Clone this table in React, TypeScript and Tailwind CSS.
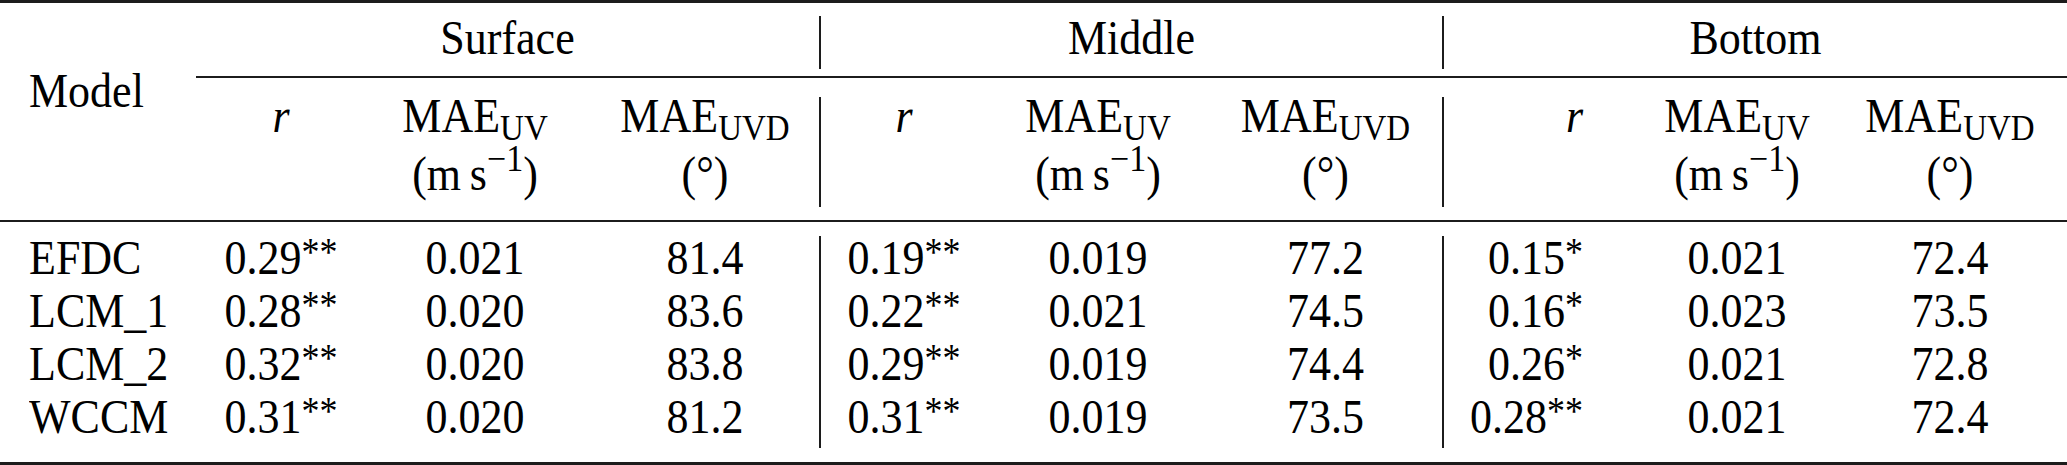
import React from 'react';

type Cell = { v: string; star?: string };

const rows: { model: string; cells: Cell[] }[] = [
  {
    model: 'EFDC',
    cells: [
      { v: '0.29', star: '**' }, { v: '0.021' }, { v: '81.4' },
      { v: '0.19', star: '**' }, { v: '0.019' }, { v: '77.2' },
      { v: '0.15', star: '*' }, { v: '0.021' }, { v: '72.4' },
    ],
  },
  {
    model: 'LCM_1',
    cells: [
      { v: '0.28', star: '**' }, { v: '0.020' }, { v: '83.6' },
      { v: '0.22', star: '**' }, { v: '0.021' }, { v: '74.5' },
      { v: '0.16', star: '*' }, { v: '0.023' }, { v: '73.5' },
    ],
  },
  {
    model: 'LCM_2',
    cells: [
      { v: '0.32', star: '**' }, { v: '0.020' }, { v: '83.8' },
      { v: '0.29', star: '**' }, { v: '0.019' }, { v: '74.4' },
      { v: '0.26', star: '*' }, { v: '0.021' }, { v: '72.8' },
    ],
  },
  {
    model: 'WCCM',
    cells: [
      { v: '0.31', star: '**' }, { v: '0.020' }, { v: '81.2' },
      { v: '0.31', star: '**' }, { v: '0.019' }, { v: '73.5' },
      { v: '0.28', star: '**' }, { v: '0.021' }, { v: '72.4' },
    ],
  },
];

// column boxes, left to right (vertical rules sit before index 3 and 6)
const colCls = [
  'w-[170px] justify-center',
  'w-[218px] justify-center',
  'w-[235px] pl-[7px] justify-center',
  'w-[166px] justify-center',
  'w-[222px] justify-center',
  'w-[233px] justify-center',
  'w-[139px] justify-end',
  'w-[308px] justify-center',
  'w-[118px] justify-center',
];

const groups = ['Surface', 'Middle', 'Bottom'];

// the source type is a little taller than Times at the same width
function Tx({ children }: { children: React.ReactNode }) {
  return <span className="inline-block whitespace-nowrap origin-[50%_38px] scale-y-[1.1]">{children}</span>;
}

function VRule() {
  return <div className="w-[2px] shrink-0 self-stretch bg-[#1c1c1c]" />;
}

function Mae({ sub }: { sub: string }) {
  return (
    <Tx>
      MAE<span className="text-[33px] leading-[0] align-[-8px]">{sub}</span>
    </Tx>
  );
}

function HeaderCell({ idx }: { idx: number }) {
  const kind = idx % 3;
  return (
    <div className={`flex shrink-0 ${colCls[idx]}`}>
      <div className="flex flex-col items-center whitespace-nowrap">
        <div className="h-[55px] leading-[41px]">
          {kind === 0 ? (
            <Tx>
              <span className="italic">r</span>
            </Tx>
          ) : kind === 1 ? (
            <Mae sub="UV" />
          ) : (
            <Mae sub="UVD" />
          )}
        </div>
        <div className="h-[55px] leading-[47px]">
          {kind === 1 ? (
            <Tx>
              (m&thinsp;s<span className="text-[34px] leading-[0] align-[17px]">−1</span>)
            </Tx>
          ) : kind === 2 ? (
            <Tx>(°)</Tx>
          ) : null}
        </div>
      </div>
    </div>
  );
}

export default function App() {
  return (
    <div className="w-[2067px] h-[465px] bg-white text-black text-[44px] font-['Liberation_Serif','Times_New_Roman',serif] overflow-hidden">
      <div className="h-[3px] bg-[#1c1c1c]" />

      {/* header */}
      <div className="flex pt-[13px]">
        <div className="w-[196px] shrink-0 pl-[29px] pt-[53px] leading-[47px]">
          <Tx>Model</Tx>
        </div>
        <div className="flex-1 flex flex-col">
          <div className="flex h-[53px] leading-[47px]">
            {groups.map((g, i) => (
              <React.Fragment key={g}>
                {i > 0 && <VRule />}
                <div className={`flex justify-center ${i === 2 ? 'flex-1' : i === 0 ? 'w-[623px]' : 'w-[621px]'}`}>
                  <Tx>{g}</Tx>
                </div>
              </React.Fragment>
            ))}
          </div>
          <div className="mt-[7px] h-[2px] bg-[#1c1c1c]" />
          <div className="flex mt-[19px]">
            {colCls.map((_, i) => (
              <React.Fragment key={i}>
                {(i === 3 || i === 6) && <VRule />}
                <HeaderCell idx={i} />
              </React.Fragment>
            ))}
          </div>
        </div>
      </div>

      <div className="mt-[13px] h-[2px] bg-[#1c1c1c]" />

      {/* body */}
      <div className="pt-[14px] pb-[14px]">
        {rows.map((row) => (
          <div key={row.model} className="flex h-[53px] leading-[47px]">
            <div className="w-[196px] shrink-0 pl-[29px]">
              <Tx>{row.model}</Tx>
            </div>
            {row.cells.map((c, i) => (
              <React.Fragment key={i}>
                {(i === 3 || i === 6) && <VRule />}
                <div className={`flex shrink-0 ${colCls[i]}`}>
                  <Tx>
                    {c.v}
                    {c.star && <span className="text-[36px] leading-[0] align-[8px]">{c.star}</span>}
                  </Tx>
                </div>
              </React.Fragment>
            ))}
          </div>
        ))}
      </div>

      <div className="h-[3px] bg-[#1c1c1c]" />
    </div>
  );
}
